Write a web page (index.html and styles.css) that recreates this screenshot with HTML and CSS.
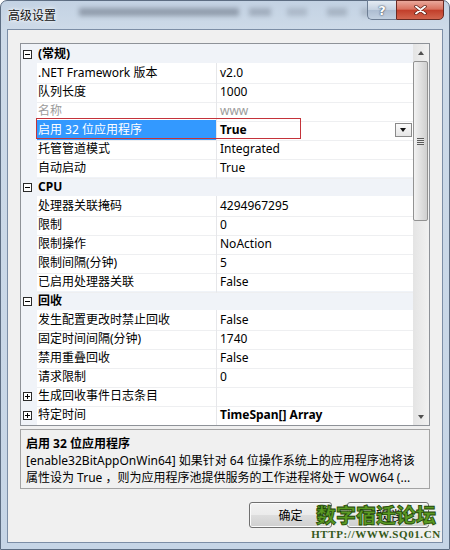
FILE: index.html
```html
<!DOCTYPE html>
<html lang="zh-CN">
<head>
  <meta charset="UTF-8" />
  <title>高级设置</title>
  <link rel="stylesheet" href="styles.css">
</head>
<body>

<div class="window">
  <div class="titlebar">
    <div class="title">高级设置</div>
    <div class="behind">
      <span class="smudge s1"></span>
      <span class="smudge s2"></span>
      <span class="smudge s3"></span>
      <span class="smudge s4"></span>
      <span class="smudge s5"></span>
    </div>
    <div class="caption-buttons">
      <div class="cap-btn help">?</div>
      <div class="cap-btn close">
        <svg width="13" height="10" viewBox="0 0 13 10">
          <path d="M2 1.5 L11 8.5 M11 1.5 L2 8.5" stroke="#5a1b12" stroke-width="3.4" stroke-linecap="round"/>
          <path d="M2 1.5 L11 8.5 M11 1.5 L2 8.5" stroke="#fff" stroke-width="2" stroke-linecap="round"/>
        </svg>
      </div>
    </div>
  </div>

  <div class="client">
    <div class="grid">
      <div class="rows">
        <div class="row cat"><span class="gutter"><span class="toggle minus"></span></span><span class="cat-name">(常规)</span></div>
        <div class="row"><span class="gutter"></span><span class="name">.NET Framework 版本</span><span class="value">v2.0</span></div>
        <div class="row"><span class="gutter"></span><span class="name">队列长度</span><span class="value">1000</span></div>
        <div class="row muted"><span class="gutter"></span><span class="name">名称</span><span class="value">www</span></div>
        <div class="row selected"><span class="gutter"></span><span class="name">启用 32 位应用程序</span><span class="value"><b>True</b><span class="dropdown"></span></span></div>
        <div class="row"><span class="gutter"></span><span class="name">托管管道模式</span><span class="value">Integrated</span></div>
        <div class="row"><span class="gutter"></span><span class="name">自动启动</span><span class="value">True</span></div>
        <div class="row cat"><span class="gutter"><span class="toggle minus"></span></span><span class="cat-name">CPU</span></div>
        <div class="row"><span class="gutter"></span><span class="name">处理器关联掩码</span><span class="value">4294967295</span></div>
        <div class="row"><span class="gutter"></span><span class="name">限制</span><span class="value">0</span></div>
        <div class="row"><span class="gutter"></span><span class="name">限制操作</span><span class="value">NoAction</span></div>
        <div class="row"><span class="gutter"></span><span class="name">限制间隔(分钟)</span><span class="value">5</span></div>
        <div class="row"><span class="gutter"></span><span class="name">已启用处理器关联</span><span class="value">False</span></div>
        <div class="row cat"><span class="gutter"><span class="toggle minus"></span></span><span class="cat-name">回收</span></div>
        <div class="row"><span class="gutter"></span><span class="name">发生配置更改时禁止回收</span><span class="value">False</span></div>
        <div class="row"><span class="gutter"></span><span class="name">固定时间间隔(分钟)</span><span class="value">1740</span></div>
        <div class="row"><span class="gutter"></span><span class="name">禁用重叠回收</span><span class="value">False</span></div>
        <div class="row"><span class="gutter"></span><span class="name">请求限制</span><span class="value">0</span></div>
        <div class="row sub"><span class="gutter"><span class="toggle plus"></span></span><span class="name">生成回收事件日志条目</span><span class="value"></span></div>
        <div class="row sub"><span class="gutter"><span class="toggle plus"></span></span><span class="name">特定时间</span><span class="value"><b>TimeSpan[] Array</b></span></div>
      </div>

      <div class="scrollbar">
        <div class="sb-btn"><span class="arrow-up"></span></div>
        <div class="thumb"><span class="grip"></span></div>
        <div class="track"></div>
        <div class="sb-btn"><span class="arrow-down"></span></div>
      </div>
    </div>

    <div class="desc">
      <div class="desc-title">启用 32 位应用程序</div>
      <div class="desc-line">[enable32BitAppOnWin64] 如果针对 64 位操作系统上的应用程序池将该</div>
      <div class="desc-line">属性设为 True ，则为应用程序池提供服务的工作进程将处于 WOW64 (...</div>
    </div>

    <div class="buttons">
      <button class="btn">确定</button>
      <button class="btn wide">取消</button>
    </div>
  </div>

  <!-- red annotation box drawn over the selected row -->
  <div class="mark"></div>

  <div class="watermark">
    <div class="wm-big">数字宿迁论坛</div>
    <div class="wm-url">HTTP://WWW.SQ01.CN</div>
  </div>
</div>

</body>
</html>
```

FILE: styles.css
```css
* {
  box-sizing: border-box;
}

html, body {
  margin: 0;
  padding: 0;
}

body {
  width: 450px;
  height: 550px;
  overflow: hidden;
  background: #fff;
  font-family: "Noto Sans", "Noto Sans CJK SC", sans-serif;
  font-size: 12px;
  color: #000;
}

.window {
  position: relative;
  width: 450px;
  height: 550px;
  display: flex;
  flex-direction: column;
  padding: 0 6px 6px;
  background: linear-gradient(180deg, #c3d2e3 0%, #cddae8 28px, #c6d5e6 100%);
  border: 1px solid #5d6d82;
  border-radius: 7px 7px 0 0;
}

/* title bar */

.titlebar {
  position: relative;
  height: 28px;
  display: flex;
  align-items: flex-start;
}

.title {
  padding: 6px 0 0 1px;
  line-height: 18px;
  font-size: 12px;
  color: #111;
  text-shadow: 0 0 6px #fff, 0 0 3px #fff;
  position: relative;
  z-index: 1;
}

.behind {
  position: absolute;
  left: 68px;
  top: 5px;
  width: 300px;
  height: 12px;
  filter: blur(2.5px);
  opacity: 0.45;
}

.smudge {
  position: absolute;
  top: 2px;
  height: 8px;
  background: #4d5666;
}

.s1 { left: 4px; width: 160px; }
.s2 { left: 174px; width: 22px; opacity: 0.7; }
.s3 { left: 212px; width: 20px; opacity: 0.5; }
.s4 { left: 252px; width: 20px; opacity: 0.6; }
.s5 { left: 286px; width: 14px; opacity: 0.5; }

.caption-buttons {
  margin-left: auto;
  margin-top: -1px;
  margin-right: -1px;
  display: flex;
  position: relative;
  z-index: 1;
}

.cap-btn {
  height: 20px;
  display: flex;
  align-items: center;
  justify-content: center;
}

.help {
  width: 29px;
  border: 1px solid #6c7d93;
  border-right: none;
  border-radius: 0 0 0 5px;
  background: linear-gradient(180deg, #e4ebf3 0%, #c5d2e1 48%, #adbdd1 52%, #c2d0e0 100%);
  color: #fff;
  font-family: "DejaVu Sans", sans-serif;
  font-weight: bold;
  font-size: 13px;
  text-shadow: 0 0 2px #39495e, 0 0 1px #39495e;
}

.close {
  width: 48px;
  border: 1px solid #6a2a22;
  border-radius: 0 0 5px 0;
  background: linear-gradient(180deg, #eaa89b 0%, #d9725f 45%, #c23f2b 52%, #d2654e 100%);
}

/* client area */

.client {
  flex: 1;
  display: flex;
  flex-direction: column;
  padding: 13px 12px 0;
  background: #f0f0f0;
  border: 1px solid #7c8ea6;
}

.grid {
  height: 383px;
  display: flex;
  background: #fff;
  border: 1px solid #8e9298;
}

.rows {
  flex: 1;
  overflow: hidden;
}

.row {
  display: grid;
  grid-template-columns: 16px 179px 1fr;
  height: 19px;
  line-height: 20px;
  white-space: nowrap;
}

.gutter {
  background: #f0f3f8;
  display: flex;
  align-items: center;
}

.name {
  padding-left: 1px;
  border-bottom: 1px solid #eeeff1;
}

.value {
  display: flex;
  align-items: flex-start;
  padding-left: 3px;
  border-left: 1px solid #e6e7ea;
  border-bottom: 1px solid #eeeff1;
}

.cat {
  background: #f0f3f8;
}

.cat-name {
  grid-column: 2 / -1;
  padding-left: 1px;
  font-weight: bold;
}

.muted .name,
.muted .value {
  color: #9b9b9b;
}

.selected .name {
  background: #3399ff;
  color: #fff;
}

.dropdown {
  margin: 3px 1px 0 auto;
  width: 17px;
  height: 14px;
  border: 1px solid #8a8a8a;
  background: linear-gradient(180deg, #fbfbfb, #e6e6e6);
  position: relative;
}

.dropdown::after {
  content: "";
  position: absolute;
  left: 4px;
  top: 4px;
  border-left: 3.5px solid transparent;
  border-right: 3.5px solid transparent;
  border-top: 4px solid #111;
}

.toggle {
  position: relative;
  margin-left: 2px;
  width: 9px;
  height: 9px;
  border: 1px solid #2a2a2a;
  background: #fff;
}

.toggle::before {
  content: "";
  position: absolute;
  left: 1px;
  top: 3px;
  width: 5px;
  height: 1px;
  background: #000;
}

.toggle.plus::after {
  content: "";
  position: absolute;
  left: 3px;
  top: 1px;
  width: 1px;
  height: 5px;
  background: #000;
}

/* scrollbar */

.scrollbar {
  width: 16px;
  display: flex;
  flex-direction: column;
  background: linear-gradient(90deg, #e4e4e4, #f1f1f1);
}

.sb-btn {
  height: 17px;
  display: flex;
  align-items: center;
  justify-content: center;
}

.arrow-up {
  border-left: 3.5px solid transparent;
  border-right: 3.5px solid transparent;
  border-bottom: 4px solid #505050;
}

.arrow-down {
  border-left: 3.5px solid transparent;
  border-right: 3.5px solid transparent;
  border-top: 4px solid #505050;
}

.thumb {
  height: 160px;
  margin: 0 1px 0 0;
  border: 1px solid #929292;
  border-radius: 2px;
  background: linear-gradient(90deg, #f2f2f2 0%, #e2e2e2 45%, #cfcfcf 100%);
  display: flex;
  align-items: center;
  justify-content: center;
}

.grip {
  width: 7px;
  height: 7px;
  background: repeating-linear-gradient(180deg, #5a5a5a 0 1px, #e6e6e6 1px 2px);
}

.track {
  flex: 1;
}

/* description panel */

.desc {
  margin-top: 3px;
  height: 60px;
  padding: 5px 5px 0;
  border: 1px solid #a3a3a3;
  line-height: 17px;
  white-space: nowrap;
  overflow: hidden;
}

.desc-title {
  font-weight: bold;
}

/* dialog buttons */

.buttons {
  margin-top: 13px;
  padding-right: 1px;
  display: flex;
  justify-content: flex-end;
  gap: 15px;
}

.btn {
  width: 83px;
  height: 26px;
  padding: 0;
  border: 1px solid #707070;
  border-radius: 3px;
  background: linear-gradient(180deg, #f2f2f2 0%, #ebebeb 48%, #dddddd 52%, #cfcfcf 100%);
  box-shadow: inset 0 0 0 1px #fbfbfb;
  font-family: "Noto Sans", "Noto Sans CJK SC", sans-serif;
  font-size: 12px;
  color: #000;
}

.btn.wide {
  width: 82px;
}

/* overlays */

.mark {
  position: absolute;
  left: 35px;
  top: 117px;
  width: 265px;
  height: 21px;
  border: 1px solid #c4333a;
}

.watermark {
  position: absolute;
  left: 308px;
  top: 502px;
  width: 134px;
  text-align: center;
}

.wm-big {
  font-family: "Noto Sans CJK SC", sans-serif;
  font-weight: 900;
  font-size: 20px;
  line-height: 24px;
  color: #5a9a22;
  -webkit-text-stroke: 0.8px #1f4608;
  text-shadow: 1px 1px 0 #dfe9cf;
}

.wm-url {
  font-family: "Liberation Serif", serif;
  font-weight: bold;
  font-size: 11px;
  line-height: 14px;
  letter-spacing: 0.6px;
  color: #35581a;
}
```
